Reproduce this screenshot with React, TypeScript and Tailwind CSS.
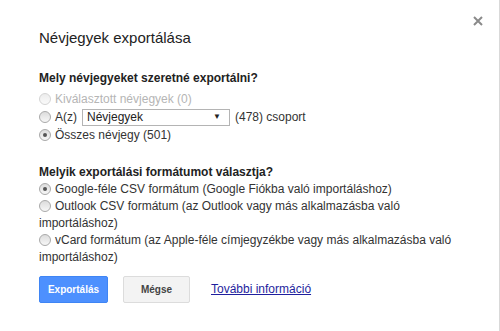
import React from "react";

type RadioProps = {
  checked?: boolean;
  disabled?: boolean;
};

const Radio: React.FC<RadioProps> = ({ checked, disabled }) => (
  <span
    className={`relative inline-block w-[12px] h-[12px] rounded-full border align-[-2px] mr-[4px] ${
      disabled
        ? "border-[#d4d4d4] bg-gradient-to-b from-[#ececec] to-[#fafafa]"
        : "border-[#a9a9a9] bg-gradient-to-b from-[#dcdcdc] to-[#f7f7f7]"
    }`}
  >
    {checked && (
      <span className="absolute left-[3px] top-[3px] w-[4px] h-[4px] rounded-full bg-[#555]" />
    )}
  </span>
);

export default function App() {
  return (
    <div
      className="relative w-[500px] h-[331px] bg-white border-r border-[#d9d9d9] text-[12px] leading-[17px] text-[#333]"
      style={{ fontFamily: '"Liberation Sans", Arial, sans-serif' }}
    >
      <button className="absolute left-[473px] top-[16px] w-[10px] h-[10px] text-[#8a8a8a]">
        <svg viewBox="0 0 10 10" className="w-[10px] h-[10px]">
          <path
            d="M1 1 L9 9 M9 1 L1 9"
            stroke="currentColor"
            strokeWidth="2"
          />
        </svg>
      </button>

      <div className="pl-[39px] pr-[39px] pt-[28px]">
        <h1 className="text-[15px] leading-[20px] text-[#222]">
          Névjegyek exportálása
        </h1>

        <div className="mt-[22px] font-bold text-[#222]">
          Mely névjegyeket szeretné exportálni?
        </div>
        <div className="mt-[3px] leading-[18px]">
          <div className="text-[#b5b5b5]">
            <Radio disabled />
            Kiválasztott névjegyek (0)
          </div>
          <div className="flex items-center h-[18px]">
            <Radio />
            <span>A(z)</span>
            <div className="ml-[5px] mr-[5px] flex items-center justify-between w-[148px] h-[17px] border border-[#b4b4b4] bg-white pl-[4px] pr-[8px] text-[#222]">
              <span>Névjegyek</span>
              <span className="text-[8px] leading-[8px]">▼</span>
            </div>
            <span>(478) csoport</span>
          </div>
          <div>
            <Radio checked />
            Összes névjegy (501)
          </div>
        </div>

        <div className="mt-[20px] font-bold text-[#222]">
          Melyik exportálási formátumot választja?
        </div>
        <div>
          <div>
            <Radio checked />
            Google-féle CSV formátum (Google Fiókba való importáláshoz)
          </div>
          <div>
            <Radio />
            Outlook CSV formátum (az Outlook vagy más alkalmazásba való
            importáláshoz)
          </div>
          <div>
            <Radio />
            vCard formátum (az Apple-féle címjegyzékbe vagy más alkalmazásba
            való importáláshoz)
          </div>
        </div>

        <div className="mt-[10px] flex items-center">
          <button className="w-[69px] h-[27px] rounded-[2px] bg-[#4d90fe] border border-[#3f85f4] text-white text-[10px] font-bold">
            Exportálás
          </button>
          <button className="ml-[15px] w-[67px] h-[27px] rounded-[2px] bg-[#f3f3f3] border border-[#dcdcdc] text-[#444] text-[10px] font-bold">
            Mégse
          </button>
          <a
            href="#"
            className="ml-[21px] underline text-[#1f1f9e] text-[12px]"
          >
            További információ
          </a>
        </div>
      </div>
    </div>
  );
}
